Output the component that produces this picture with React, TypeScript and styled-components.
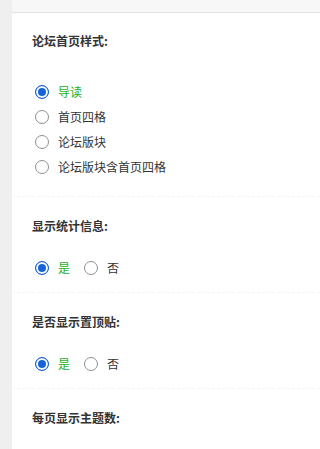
import React, { useState } from "react";
import styled, { createGlobalStyle } from "styled-components";

const GlobalStyle = createGlobalStyle`
  html, body {
    margin: 0;
    padding: 0;
    background: #ffffff;
    font-family: "Noto Sans CJK SC", "Liberation Sans", sans-serif;
  }
`;

interface IOption {
  value: string;
  label: string;
}

interface ISetting {
  key: string;
  title: string;
  inline?: boolean;
  options: IOption[];
}

const settings: ISetting[] = [
  {
    key: "style",
    title: "论坛首页样式:",
    options: [
      { value: "guide", label: "导读" },
      { value: "grid", label: "首页四格" },
      { value: "forum", label: "论坛版块" },
      { value: "both", label: "论坛版块含首页四格" },
    ],
  },
  {
    key: "stats",
    title: "显示统计信息:",
    inline: true,
    options: [
      { value: "yes", label: "是" },
      { value: "no", label: "否" },
    ],
  },
  {
    key: "sticky",
    title: "是否显示置顶贴:",
    inline: true,
    options: [
      { value: "yes", label: "是" },
      { value: "no", label: "否" },
    ],
  },
];

export default function App() {
  const [values, setValues] = useState<Record<string, string>>({
    style: "guide",
    stats: "yes",
    sticky: "yes",
  });

  return (
    <Page>
      <GlobalStyle />
      <SideStrip />
      <Main>
        <TopBar />
        <Panel>
          {settings.map((s, i) => (
            <Section key={s.key} $first={i === 0}>
              <Title>{s.title}</Title>
              <Options $inline={!!s.inline} $first={i === 0}>
                {s.options.map((o) => {
                  const checked = values[s.key] === o.value;
                  return (
                    <Option
                      key={o.value}
                      $inline={!!s.inline}
                      onClick={() =>
                        setValues((v) => ({ ...v, [s.key]: o.value }))
                      }
                    >
                      <Radio $checked={checked} />
                      <Label $checked={checked}>{o.label}</Label>
                    </Option>
                  );
                })}
              </Options>
            </Section>
          ))}
          <Section>
            <Title>每页显示主题数:</Title>
          </Section>
        </Panel>
      </Main>
    </Page>
  );
}

const Page = styled.div`
  display: flex;
  flex-direction: row;
  min-height: 449px;
`;

const SideStrip = styled.div`
  width: 12px;
  flex-shrink: 0;
  background: #efefef;
`;

const Main = styled.div`
  flex: 1;
  display: flex;
  flex-direction: column;
`;

const TopBar = styled.div`
  height: 12px;
  background: #f7f7f7;
  border-bottom: 1px solid #e3e3e3;
`;

const Panel = styled.div`
  background: #ffffff;
  display: flex;
  flex-direction: column;
`;

const Section = styled.div<{ $first?: boolean }>`
  padding: ${(p) => (p.$first ? "20px 0 17px" : "21px 0 12px")} 20px;
  border-bottom: 1px dashed #f5f5f5;

  &:last-child {
    border-bottom: none;
  }
`;

const Title = styled.div`
  font-size: 12px;
  line-height: 16px;
  font-weight: 700;
  color: #333333;
`;

const Options = styled.div<{ $inline: boolean; $first: boolean }>`
  display: flex;
  flex-direction: ${(p) => (p.$inline ? "row" : "column")};
  margin-top: ${(p) => (p.$first ? "30px" : "21px")};
`;

const Option = styled.label<{ $inline: boolean }>`
  display: flex;
  align-items: center;
  height: 25px;
  margin-right: ${(p) => (p.$inline ? "11px" : "0")};
  cursor: pointer;
`;

const Radio = styled.span<{ $checked: boolean }>`
  width: 14px;
  height: 14px;
  box-sizing: border-box;
  border-radius: 50%;
  margin: 0 3px;
  border: 1px solid ${(p) => (p.$checked ? "#1565d8" : "#8f8f8f")};
  background: ${(p) => (p.$checked ? "#1565d8" : "#ffffff")};
  box-shadow: ${(p) => (p.$checked ? "inset 0 0 0 2px #ffffff" : "none")};
`;

const Label = styled.span<{ $checked: boolean }>`
  margin-left: 6px;
  font-size: 12px;
  color: ${(p) => (p.$checked ? "#1db11d" : "#333333")};
`;
